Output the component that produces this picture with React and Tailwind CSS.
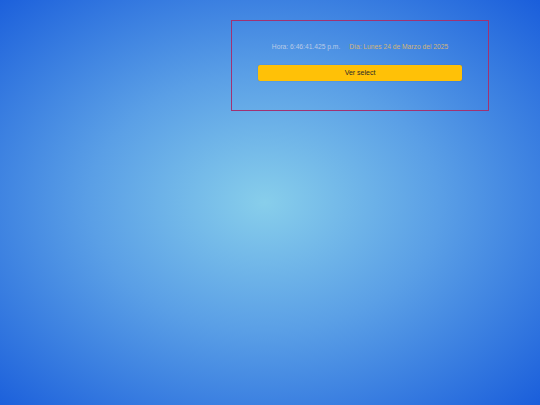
export default function App() {
  return (
    <div
      className="w-[540px] h-[405px] overflow-hidden bg-[radial-gradient(ellipse_at_49%_50%,#87ceeb_0%,#5a9fe6_45%,#1a5edb_100%)] flex justify-end pt-[20px] pr-[51px]"
      style={{ fontFamily: '"Liberation Sans", Arial, sans-serif' }}
    >
      <div className="w-[258px] h-[91px] border border-[#a03272] flex flex-col items-center px-[26px] pt-[21px]">
        <div className="flex gap-[9px] text-[6.7px] leading-[10px]">
          <span className="text-[#bccbe6]">Hora: 6:46:41.425 p.m.</span>
          <span className="text-[#d2b57a]">Día: Lunes 24 de Marzo del 2025</span>
        </div>
        <button className="mt-[13px] w-full h-[16px] rounded-[2px] bg-[#ffc107] text-[#2a2a2a] text-[7px] leading-[16px] shadow-[0_0_1px_rgba(0,0,0,0.3)]">
          Ver select
        </button>
      </div>
    </div>
  );
}
